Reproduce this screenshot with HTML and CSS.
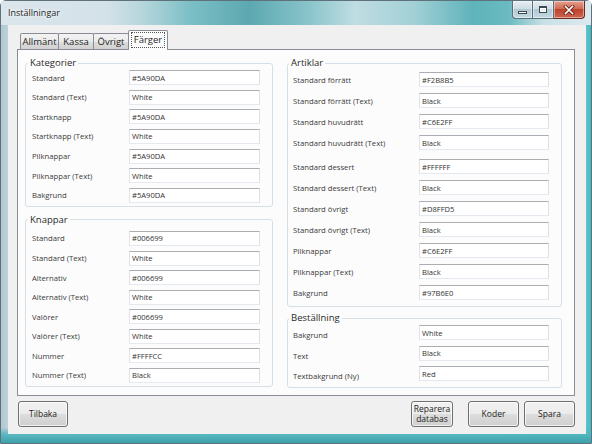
FILE: index.html
```html
<!DOCTYPE html>
<html lang="sv">
<head>
<meta charset="utf-8">
<title>Inställningar</title>
<link rel="stylesheet" href="styles.css">
</head>
<body>
<div class="window">
  <div class="titlebar">
    <span class="title">Inställningar</span>
    <div class="caption-btns">
      <span class="cb cb-min"><i class="min-glyph"></i></span>
      <span class="cb cb-max"><i class="max-glyph"></i></span>
      <span class="cb cb-close">
        <svg width="12" height="10" viewBox="0 0 12 10">
          <path d="M2.5 1.5 L9.5 8.5 M9.5 1.5 L2.5 8.5" stroke="#6a2318" stroke-width="3.2" stroke-linecap="square"/>
          <path d="M2.5 1.5 L9.5 8.5 M9.5 1.5 L2.5 8.5" stroke="#ffffff" stroke-width="1.6" stroke-linecap="square"/>
        </svg>
      </span>
    </div>
  </div>
  <div class="client">
    <div class="tabs">
      <span class="tab tab-allm">Allmänt</span>
      <span class="tab tab-kassa">Kassa</span>
      <span class="tab tab-ovr">Övrigt</span>
      <span class="tab tab-active"><span class="focus">Färger</span></span>
    </div>
    <div class="page">
      <div class="col col-left">
        <fieldset class="group g-kat">
          <legend>Kategorier</legend>
          <div class="row"><span class="lbl">Standard</span><span class="box">#5A90DA</span></div>
          <div class="row"><span class="lbl">Standard (Text)</span><span class="box">White</span></div>
          <div class="row"><span class="lbl">Startknapp</span><span class="box">#5A90DA</span></div>
          <div class="row"><span class="lbl">Startknapp (Text)</span><span class="box">White</span></div>
          <div class="row"><span class="lbl">Pilknappar</span><span class="box">#5A90DA</span></div>
          <div class="row"><span class="lbl">Pilknappar (Text)</span><span class="box">White</span></div>
          <div class="row"><span class="lbl">Bakgrund</span><span class="box">#5A90DA</span></div>
        </fieldset>
        <fieldset class="group g-knappar">
          <legend>Knappar</legend>
          <div class="row"><span class="lbl">Standard</span><span class="box">#006699</span></div>
          <div class="row"><span class="lbl">Standard (Text)</span><span class="box">White</span></div>
          <div class="row"><span class="lbl">Alternativ</span><span class="box">#006699</span></div>
          <div class="row"><span class="lbl">Alternativ (Text)</span><span class="box">White</span></div>
          <div class="row"><span class="lbl">Valörer</span><span class="box">#006699</span></div>
          <div class="row"><span class="lbl">Valörer (Text)</span><span class="box">White</span></div>
          <div class="row"><span class="lbl">Nummer</span><span class="box">#FFFFCC</span></div>
          <div class="row"><span class="lbl">Nummer (Text)</span><span class="box">Black</span></div>
        </fieldset>
      </div>
      <div class="col col-right">
        <fieldset class="group g-art">
          <legend>Artiklar</legend>
          <div class="row"><span class="lbl">Standard förrätt</span><span class="box">#F2B8B5</span></div>
          <div class="row"><span class="lbl">Standard förrätt (Text)</span><span class="box">Black</span></div>
          <div class="row"><span class="lbl">Standard huvudrätt</span><span class="box">#C6E2FF</span></div>
          <div class="row"><span class="lbl">Standard huvudrätt (Text)</span><span class="box">Black</span></div>
          <div class="row row-sep"><span class="lbl">Standard dessert</span><span class="box">#FFFFFF</span></div>
          <div class="row"><span class="lbl">Standard dessert (Text)</span><span class="box">Black</span></div>
          <div class="row"><span class="lbl">Standard övrigt</span><span class="box">#D8FFD5</span></div>
          <div class="row"><span class="lbl">Standard övrigt (Text)</span><span class="box">Black</span></div>
          <div class="row"><span class="lbl">Pilknappar</span><span class="box">#C6E2FF</span></div>
          <div class="row"><span class="lbl">Pilknappar (Text)</span><span class="box">Black</span></div>
          <div class="row"><span class="lbl">Bakgrund</span><span class="box">#97B6E0</span></div>
        </fieldset>
        <fieldset class="group g-best">
          <legend>Beställning</legend>
          <div class="row"><span class="lbl">Bakgrund</span><span class="box">White</span></div>
          <div class="row"><span class="lbl">Text</span><span class="box">Black</span></div>
          <div class="row"><span class="lbl">Textbakgrund (Ny)</span><span class="box">Red</span></div>
        </fieldset>
      </div>
    </div>
    <div class="buttons">
      <button class="btn btn-back">Tilbaka</button>
      <button class="btn btn-repair">Reparera<br>databas</button>
      <button class="btn btn-codes">Koder</button>
      <button class="btn btn-save">Spara</button>
    </div>
  </div>
</div>
</body>
</html>
```
FILE: styles.css
```css
* { box-sizing: border-box; }
html, body { margin: 0; padding: 0; }
body {
  width: 592px;
  height: 444px;
  overflow: hidden;
  background: #ffffff;
  font-family: "Open Sans", "Noto Sans", sans-serif;
  color: #222;
}

/* ---------- window frame ---------- */
.window {
  width: 592px;
  height: 444px;
  display: flex;
  flex-direction: column;
  border: 1px solid #5f727c;
  border-radius: 6px 6px 0 0;
  background:
    linear-gradient(180deg, rgba(0,0,0,0) 0%, rgba(0,0,0,0) 96.5%, rgba(80,182,190,0.9) 98%, rgba(62,160,170,1) 100%),
    linear-gradient(90deg, #b4c8d1 0%, #c3d8df 2%, #a9ccd3 40%, #8fcbd1 80%, #5ec8ce 99%, #4bb6be 100%);
}

.titlebar {
  height: 24px;
  display: flex;
  align-items: flex-start;
  padding-left: 7px;
  padding-right: 6px;
  background: linear-gradient(90deg,
      #dbe6ec 0%, #d3e1e8 18%, #b6d6dc 24%, #7dbfc6 32%, #5ca8b1 42%,
      #88c4ca 52%, #bfdde2 60%, #a2d0d6 70%, #5fb3ba 80%, #6bbac1 86%,
      #c9e0e7 92%, #dce9ef 100%);
}
.title {
  font-size: 9px;
  line-height: 24px;
  color: #1a1a1a;
  text-shadow: 0 0 5px #ffffff, 0 0 3px #ffffff;
}
.caption-btns {
  margin-left: auto;
  display: flex;
  height: 18px;
}
.cb {
  height: 18px;
  display: flex;
  align-items: center;
  justify-content: center;
  border: 1px solid #5d6d76;
  border-top: none;
  background: linear-gradient(180deg, #e6eef2 0%, #cfdde5 45%, #b1c7d2 50%, #c5dbe3 100%);
  box-shadow: inset 0 0 0 1px rgba(255,255,255,0.45);
}
.cb-min { width: 20px; border-radius: 0 0 0 4px; border-right: none; }
.cb-max { width: 22px; }
.cb-close {
  width: 31px;
  border-left: none;
  border-radius: 0 0 4px 0;
  border-color: #6a2a20;
  background: linear-gradient(180deg, #e3a08f 0%, #d06a55 45%, #bd422c 50%, #cc6650 100%);
}
.min-glyph {
  display: block;
  width: 9px;
  height: 3px;
  margin-top: 5px;
  background: #ffffff;
  border: 1px solid #3b4a52;
}
.max-glyph {
  display: block;
  width: 8px;
  height: 7px;
  border: 1px solid #3b4a52;
  border-top-width: 2px;
  background: #e9f0f4;
  box-shadow: inset 0 0 0 1px #ffffff;
}

/* ---------- client area ---------- */
.client {
  flex: 1;
  margin: 0 5px 9px 7px;
  background: #f0f0f0;
  display: flex;
  flex-direction: column;
  padding: 5px 11px 7px 9px;
}

.tabs {
  height: 20px;
  display: flex;
  align-items: flex-end;
  padding-left: 3px;
}
.tab {
  height: 16px;
  margin-bottom: 1px;
  display: flex;
  align-items: center;
  justify-content: center;
  font-size: 9.5px;
  color: #1e1e1e;
  border: 1px solid #898c95;
  border-bottom: none;
  border-radius: 2px 2px 0 0;
  background: linear-gradient(180deg, #f3f3f3 0%, #ebebeb 50%, #dedede 51%, #d1d1d1 100%);
}
.tab + .tab { margin-left: -1px; }
.tab-allm { width: 39px; }
.tab-kassa { width: 36px; }
.tab-ovr { width: 36px; }
.tab-active {
  width: 40px;
  height: 20px;
  margin-bottom: 0;
  margin-left: -1px;
  position: relative;
  z-index: 2;
  background: #fcfcfc;
  align-items: flex-start;
  padding-top: 1px;
}
.focus {
  display: block;
  border: 1px dotted #555;
  padding: 0 2px;
  line-height: 14px;
}

.page {
  height: 347px;
  margin-top: -1px;
  border: 1px solid #898c95;
  background: #fcfcfc;
  display: flex;
  gap: 14px;
  padding: 7px 12px 0 7px;
}
.col { display: flex; flex-direction: column; }
.col-left { width: 248px; }
.col-right { width: 275px; }

/* ---------- group boxes ---------- */
.group {
  margin: 0;
  min-width: 0;
  border: 1px solid #d5dfe5;
  border-radius: 3px;
  display: flex;
  flex-direction: column;
}
.group legend {
  font-size: 9.5px;
  line-height: 12px;
  padding: 0 2px;
  margin-left: -4px;
  color: #2a2a2a;
}
.col-left .group { padding: 1px 12px 3px 6px; }
.col-right .group { padding: 3px 12px 6px 5px; }

.g-kat { gap: 4.67px; }
.g-knappar { margin-top: 7px; padding-top: 5px !important; gap: 4.57px; }
.g-art { gap: 6px; }
.g-best { margin-top: 5px; padding-top: 1px !important; gap: 5.5px; }

.row {
  display: grid;
  height: 15px;
  align-items: center;
}
.col-left .row { grid-template-columns: 97px 131px; }
.col-right .row { grid-template-columns: 126px 130px; }
.row-sep { margin-top: 3px; }

.lbl {
  font-size: 7.7px;
  color: #3a3a3a;
  white-space: nowrap;
}
.g-best .lbl { margin-top: 5px; }

.box {
  height: 15px;
  display: flex;
  align-items: center;
  padding-left: 2px;
  font-size: 7.6px;
  color: #333;
  background: #ffffff;
  border: 1px solid;
  border-color: #abadb3 #dbdfe6 #e3e9ef #e2e3ea;
}

/* ---------- bottom buttons ---------- */
.buttons {
  display: flex;
  margin-top: 5px;
  height: 26px;
}
.btn {
  height: 26px;
  padding: 0;
  font-family: inherit;
  font-size: 8.5px;
  line-height: 10px;
  color: #222;
  border: 1px solid #707070;
  border-radius: 3px;
  background: linear-gradient(180deg, #f2f2f2 0%, #ebebeb 50%, #dddddd 51%, #cfcfcf 100%);
  box-shadow: inset 0 0 0 1px rgba(255,255,255,0.7);
}
.btn-back { width: 50px; margin-left: 1px; }
.btn-repair { width: 42px; margin-left: auto; }
.btn-codes { width: 51px; margin-left: 15px; }
.btn-save { width: 51px; margin-left: 5px; }
```
